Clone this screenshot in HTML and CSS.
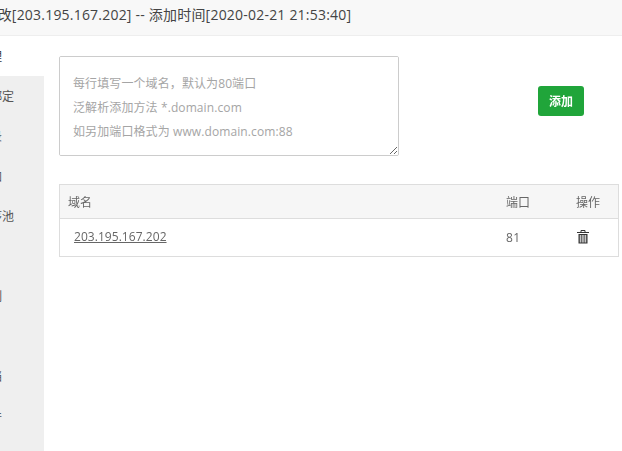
FILE: index.html
```html
<!DOCTYPE html>
<html lang="zh-CN">
<head>
<meta charset="utf-8">
<title>站点修改</title>
<link rel="stylesheet" href="styles.css">
</head>
<body>
<div class="layer">
  <header class="title"><span class="title-text">站点修改[203.195.167.202] -- 添加时间[2020-02-21 21:53:40]</span></header>
  <div class="main">
    <nav class="menu">
      <p class="item active">域名管理</p>
      <p class="item">子目录绑定</p>
      <p class="item">网站目录</p>
      <p class="item">站点附加</p>
      <p class="item">应用程序池</p>
      <p class="item">伪静态</p>
      <p class="item">流量限制</p>
      <p class="item">重定向</p>
      <p class="item">默认文档</p>
      <p class="item">配置文件</p>
    </nav>
    <section class="content">
      <div class="add-row">
        <textarea class="domains" placeholder="每行填写一个域名，默认为80端口&#10;泛解析添加方法 *.domain.com&#10;如另加端口格式为 www.domain.com:88"></textarea>
        <button class="add-btn" type="button">添加</button>
      </div>
      <table class="table">
        <thead>
          <tr><th class="col-domain">域名</th><th class="col-port">端口</th><th class="col-op">操作</th></tr>
        </thead>
        <tbody>
          <tr>
            <td class="col-domain"><a class="domain-link" href="#">203.195.167.202</a></td>
            <td class="col-port">81</td>
            <td class="col-op">
              <svg class="trash" viewBox="0 0 12 14" width="12" height="14" aria-label="删除">
                <path d="M4 2V.5h4V2M0 2.5h12" fill="none" stroke="#333" stroke-width="1"/>
                <path d="M1.5 4h9v9.5h-9z" fill="#333"/>
                <path d="M3.3 5v7.5M5.2 5v7.5M6.9 5v7.5M8.7 5v7.5" stroke="#fff" stroke-width=".9"/>
              </svg>
            </td>
          </tr>
        </tbody>
      </table>
    </section>
  </div>
</div>
</body>
</html>
```

FILE: styles.css
```css
html, body {
  margin: 0;
  height: 100%;
  overflow: hidden;
  background: #fff;
}
.layer {
  display: flex;
  flex-direction: column;
  height: 451px;
  font-family: "Open Sans", "Noto Sans CJK SC", sans-serif;
  color: #555;
}
.title {
  flex: none;
  height: 35px;
  line-height: 30px;
  background: #f8f8f8;
  border-bottom: 1px solid #eee;
  font-size: 14px;
  color: #444;
  white-space: nowrap;
}
.title-text {
  display: block;
  margin-left: -45px;
  letter-spacing: .21px;
}
.main {
  flex: 1;
  display: flex;
  min-height: 0;
}
.menu {
  flex: none;
  width: 110px;
  margin-left: -66px;
  background: #efefef;
  overflow: hidden;
}
.item {
  box-sizing: border-box;
  margin: 0;
  height: 40px;
  padding: 1px 0 0 20px;
  line-height: 40px;
  font-size: 12px;
  color: #555;
  white-space: nowrap;
}
.item.active {
  background: #fff;
  color: #333;
}
.content {
  flex: none;
  width: 560px;
  margin-left: 15px;
  padding-top: 20px;
}
.add-row {
  display: flex;
  align-items: flex-start;
  height: 100px;
}
.domains {
  box-sizing: border-box;
  flex: none;
  width: 340px;
  height: 100px;
  margin: 0;
  padding: 15px 13px;
  border: 1px solid #ccc;
  border-radius: 2px;
  font: 12px/24px "Open Sans", "Noto Sans CJK SC", sans-serif;
  letter-spacing: .1px;
  outline: none;
}
.domains::placeholder {
  color: #a5a5a5;
  opacity: 1;
}
.add-btn {
  width: 46px;
  height: 30px;
  margin: 30px 0 0 139px;
  padding: 0;
  border: 0;
  border-radius: 3px;
  background: #20a53a;
  color: #fff;
  font: 600 12px "Open Sans", "Noto Sans CJK SC", sans-serif;
}
.table {
  width: 560px;
  margin-top: 28px;
  border-collapse: collapse;
  table-layout: fixed;
  font-size: 12px;
}
.table th, .table td {
  border: 1px solid #ddd;
  text-align: left;
}
.table th {
  height: 33px;
  padding: 0 8px;
  background: #f6f6f6;
  font-weight: 400;
  color: #666;
}
.table td {
  height: 37px;
  padding: 0 8px;
  color: #666;
}
.table tr > * + * {
  border-left: 0;
}
.table tr > *:not(:last-child) {
  border-right: 0;
}
.col-port { width: 54px; }
.col-op { width: 34px; }
.table td.col-domain {
  height: 35px;
  padding: 0 8px 2px 14px;
}
.table td.col-port {
  letter-spacing: .3px;
}
.domain-link {
  color: #666;
  font-size: 12px;
  letter-spacing: .05px;
}
.trash {
  display: block;
  margin: 0 0 2px 1px;
}
```
